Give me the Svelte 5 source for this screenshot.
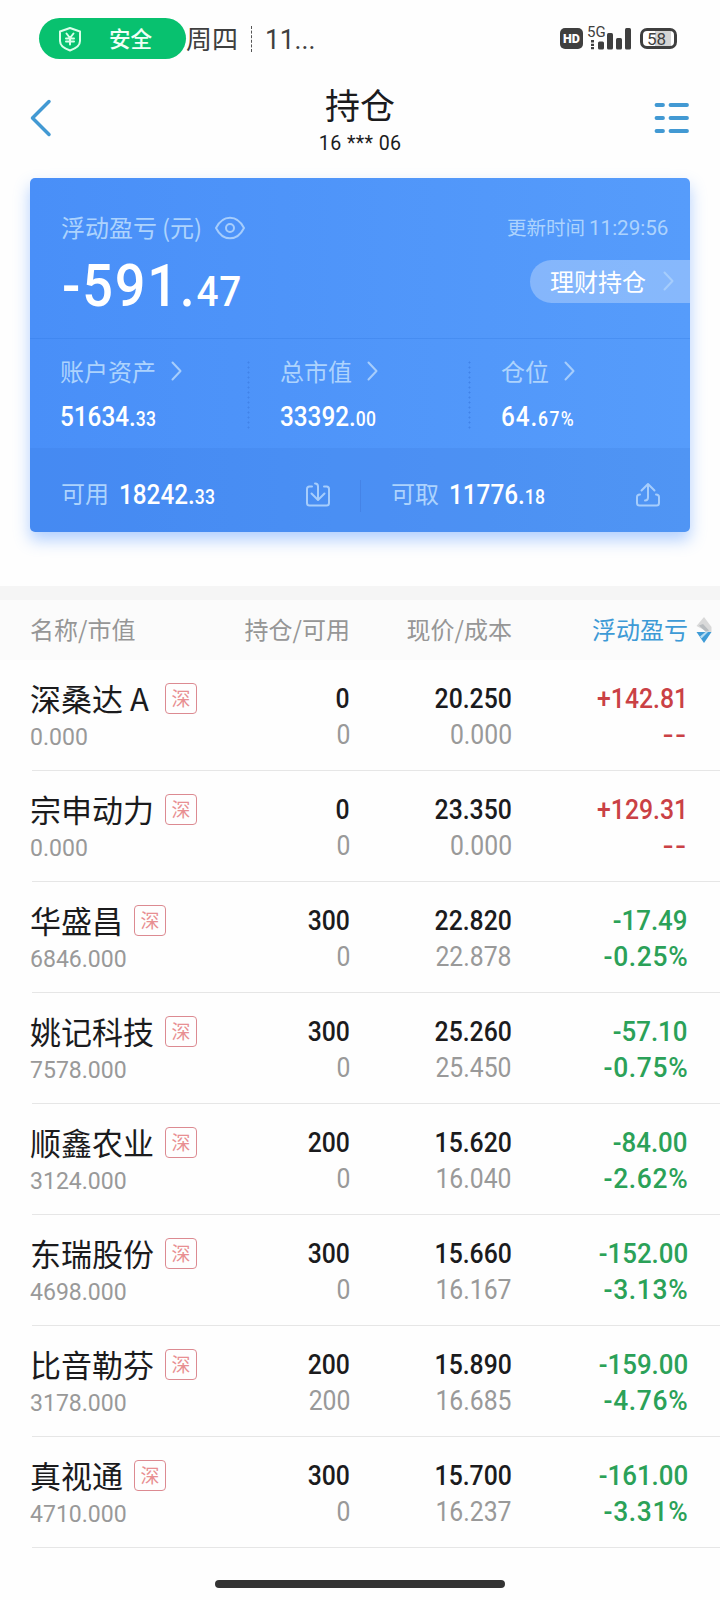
<script lang="ts">
  type Holding = {
    name: string;
    value: string;
    amount: string;
    available: string;
    price: string;
    cost: string;
    profit: string;
    rate: string;
  };

  const stats = [
    { label: '账户资产', whole: '51634.', part: '33' },
    { label: '总市值', whole: '33392.', part: '00' },
    { label: '仓位', whole: '64.', part: '67%' },
  ];

  const holdings: Holding[] = [
    { name: '深桑达 A', value: '0.000', amount: '0', available: '0', price: '20.250', cost: '0.000', profit: '+142.81', rate: '--' },
    { name: '宗申动力', value: '0.000', amount: '0', available: '0', price: '23.350', cost: '0.000', profit: '+129.31', rate: '--' },
    { name: '华盛昌', value: '6846.000', amount: '300', available: '0', price: '22.820', cost: '22.878', profit: '-17.49', rate: '-0.25%' },
    { name: '姚记科技', value: '7578.000', amount: '300', available: '0', price: '25.260', cost: '25.450', profit: '-57.10', rate: '-0.75%' },
    { name: '顺鑫农业', value: '3124.000', amount: '200', available: '0', price: '15.620', cost: '16.040', profit: '-84.00', rate: '-2.62%' },
    { name: '东瑞股份', value: '4698.000', amount: '300', available: '0', price: '15.660', cost: '16.167', profit: '-152.00', rate: '-3.13%' },
    { name: '比音勒芬', value: '3178.000', amount: '200', available: '200', price: '15.890', cost: '16.685', profit: '-159.00', rate: '-4.76%' },
    { name: '真视通', value: '4710.000', amount: '300', available: '0', price: '15.700', cost: '16.237', profit: '-161.00', rate: '-3.31%' },
  ];
</script>

{#snippet chevron()}
  <svg class="chevron" width="12" height="20" viewBox="0 0 12 20" aria-hidden="true">
    <path d="M1.500 1.500 9.500 10 1.500 18.500" />
  </svg>
{/snippet}

<div class="screen">
  <div class="status">
    <div class="safe">
      <svg width="24" height="26" viewBox="0 0 24 26" aria-hidden="true">
        <path d="M12 2 22 5.500V15c0 4.500-4 7.500-10 9.500C6 22.500 2 19.500 2 15V5.500z" />
        <path d="M8.500 7.500 12 12l3.500-4.500M12 12v6.500M8 12.500h8M8 15.500h8" />
      </svg>
      <span>安全</span>
    </div>
    <span class="weekday">周四</span>
    <span class="tick"></span>
    <span class="clock num">11...</span>
    <div class="indicators">
      <span class="hd">HD</span>
      <div class="signal">
        <span>5G</span>
        <svg width="45" height="26" viewBox="0 0 45 26" aria-hidden="true">
          <path d="M4 16h3v2.500H4zM4 19.700h3v2.200H4zM4 23h3v2.300H4z" />
          <rect x="11" y="17.500" width="6" height="8" rx="1.500" />
          <rect x="20" y="9" width="6" height="16.500" rx="1.500" />
          <rect x="29" y="14" width="6" height="11.500" rx="1.500" />
          <rect x="38" y="4" width="6" height="21.500" rx="1.500" />
        </svg>
      </div>
      <div class="battery"><span>58</span></div>
    </div>
  </div>

  <header class="nav">
    <button aria-label="返回">
      <svg width="22" height="38" viewBox="0 0 22 38" aria-hidden="true">
        <path d="M19 2.500 2.500 19 19 35.500" />
      </svg>
    </button>
    <div class="title">
      <h1>持仓</h1>
      <span class="num">16 *** 06</span>
    </div>
    <button class="menu" aria-label="菜单">
      <svg width="36" height="30" viewBox="0 0 36 30" aria-hidden="true">
        <path d="M2.500 2h6.500M16.500 2h16.500M2.500 15h6.500M16.500 15h16.500M2.500 28h6.500M16.500 28h16.500" />
      </svg>
    </button>
  </header>

  <section class="card">
    <div class="summary">
      <div class="summary-head">
        <span class="label">浮动盈亏</span>
        <span class="unit">(元)</span>
        <svg class="eye" width="32" height="24" viewBox="0 0 32 24" aria-hidden="true">
          <path d="M2 12C5 6 9.500 1.700 16 1.700S27 6 30 12C27 18 22.500 22.300 16 22.300S5 18 2 12z" />
          <circle cx="16" cy="12" r="4" />
        </svg>
        <span class="updated">更新时间 <span class="num">11:29:56</span></span>
      </div>
      <div class="summary-body">
        <span class="total num">-591.<small>47</small></span>
        <button class="wealth">理财持仓 {@render chevron()}</button>
      </div>
    </div>

    <div class="stats">
      {#each stats as stat}
        <div class="stat">
          <div class="stat-label">{stat.label} {@render chevron()}</div>
          <div class="amount num">{stat.whole}<small>{stat.part}</small></div>
        </div>
      {/each}
    </div>

    <div class="funds">
      <div class="fund">
        <span class="label">可用</span>
        <span class="amount num">18242.<small>33</small></span>
        <svg width="26" height="26" viewBox="0 0 26 26" aria-hidden="true">
          <path d="M7 4.500H4.500c-1.500 0-2.500 1-2.500 2.500V21c0 1.500 1 2.500 2.500 2.500h17c1.500 0 2.500-1 2.500-2.500V7c0-1.500-1-2.500-2.500-2.500H19" />
          <path d="M10 1.500c2 0 3 1 3 3V17M6.500 11.500 13 18l6.500-6.500" />
        </svg>
      </div>
      <div class="fund">
        <span class="label">可取</span>
        <span class="amount num">11776.<small>18</small></span>
        <svg width="26" height="26" viewBox="0 0 26 26" aria-hidden="true">
          <path d="M5 12.500c-2 0-3 1-3 2.500v6c0 1.500 1 2.500 2.500 2.500h17c1.500 0 2.500-1 2.500-2.500v-6c0-1.500-1-2.500-3-2.500" />
          <path d="M10 18.500c2 0 3-1 3-3V2M6.500 8.500 13 2l6.500 6.500" />
        </svg>
      </div>
    </div>
  </section>

  <section class="holdings">
    <div class="row head">
      <span>名称/市值</span>
      <span>持仓/可用</span>
      <span>现价/成本</span>
      <span class="active">浮动盈亏</span>
      <svg width="16" height="28" viewBox="0 0 16 28" aria-hidden="true">
        <path fill="#d9d9d9" d="M8 1 15.500 11v5H12L.5 10z" />
        <path fill="#b8bcbf" d="M3 9.500 7 8l6 6.500-3 1.500z" />
        <path fill="#3f9bd6" d="M.5 16h15L8 27z" />
        <path fill="#b5dcf3" d="M10 15.500h2.500L5.500 22.500 4 20.500z" />
      </svg>
    </div>
    {#each holdings as item}
      <div class="row item">
        <div class="stock">
          <div class="name"><span>{item.name}</span><i>深</i></div>
          <div class="value num">{item.value}</div>
        </div>
        <div class="pair"><span class="num">{item.amount}</span><span class="num muted">{item.available}</span></div>
        <div class="pair"><span class="num">{item.price}</span><span class="num muted">{item.cost}</span></div>
        <div class="pair {item.profit.startsWith('+') ? 'up' : 'down'}">
          <span class="num">{item.profit}</span><span class="num rate">{item.rate}</span>
        </div>
      </div>
    {/each}
  </section>

  <div class="home-bar"></div>
</div>

<style>
  :global(body) {
    background: #fefefe;
  }

  .screen {
    width: 720px;
    height: 1600px;
    overflow: hidden;
    display: flex;
    flex-direction: column;
    background: #fefefe;
    color: #1b1b1d;
    font-family: 'Noto Sans CJK SC', sans-serif;
  }

  button {
    padding: 0;
    border: 0;
    background: none;
    color: inherit;
    font: inherit;
  }

  svg {
    display: block;
    flex: none;
    fill: none;
    stroke-linecap: round;
    stroke-linejoin: round;
  }

  .num {
    display: inline-block;
    font-family: Roboto, 'Noto Sans CJK SC', sans-serif;
    font-weight: 500;
    white-space: nowrap;
    transform: scaleX(0.9);
    transform-origin: left center;
  }

  .status {
    height: 77px;
    display: flex;
    align-items: center;
    padding: 0 43px 0 39px;
    color: #3f3f3f;
  }

  .safe {
    width: 147px;
    height: 41px;
    box-sizing: border-box;
    display: flex;
    align-items: center;
    padding-left: 19px;
    gap: 27px;
    border-radius: 21px;
    background: #08c16f;
    color: #f0fff6;
    font-size: 21.5px;
    font-weight: 500;
    line-height: 39px;
  }

  .safe span {
    padding-bottom: 3px;
  }

  .safe svg {
    stroke: #d9ffe9;
    stroke-width: 2;
  }

  .weekday {
    padding-bottom: 2px;
    font-size: 26px;
    line-height: 40px;
  }

  .tick {
    height: 26px;
    margin: 0 13px;
    border-left: 1.500px dashed #555;
  }

  .clock {
    font-size: 28px;
    font-weight: 400;
    padding-top: 2px;
    transform: scaleX(0.94);
  }

  .indicators {
    display: flex;
    align-items: center;
    margin-left: auto;
  }

  .hd {
    width: 23px;
    height: 21px;
    border-radius: 5px;
    background: #3f3f3f;
    color: #fff;
    font: 900 12.5px/21px Roboto, sans-serif;
    text-align: center;
  }

  .signal {
    position: relative;
    margin: -3px 8px 0 4px;
  }

  .signal span {
    position: absolute;
    top: 1px;
    left: 0;
    font: 15px/14px Roboto, sans-serif;
  }

  .signal svg {
    fill: #3f3f3f;
  }

  .battery {
    width: 37px;
    height: 21px;
    box-sizing: border-box;
    border: 3px solid #3f3f3f;
    border-radius: 7px;
    background: linear-gradient(90deg, #fff 40%, #d4d4d4 40%, #d4d4d4 90%, #fff 90%);
  }

  .battery span {
    display: block;
    padding-left: 4px;
    font: 17px/16px Roboto, sans-serif;
  }

  .nav {
    height: 101px;
    box-sizing: border-box;
    display: grid;
    grid-template-columns: 60px 1fr 60px;
    padding: 0 30px;
  }

  .nav button {
    height: 82px;
    display: flex;
    align-items: center;
  }

  .nav svg {
    stroke: #4299d3;
    stroke-width: 3.5;
  }

  .nav .menu {
    justify-content: flex-end;
  }

  .menu svg {
    stroke-width: 3.8;
  }

  .title {
    display: flex;
    flex-direction: column;
    align-items: center;
  }

  h1 {
    margin: 1px 0 2px;
    font-size: 35px;
    font-weight: 400;
    line-height: 51px;
  }

  .title .num {
    font-size: 20px;
    line-height: 24px;
    font-weight: 450;
    letter-spacing: 0.4px;
    transform: scaleX(0.98);
    transform-origin: center;
  }

  .card {
    flex: none;
    height: 354px;
    margin: 0 30px;
    border-radius: 5px;
    background: linear-gradient(90deg, #498ff8, #569cfb);
    box-shadow: 0 8px 16px rgba(84, 150, 255, 0.45);
    color: #fff;
  }

  .summary {
    height: 160px;
    padding-left: 31px;
    border-bottom: 1px solid rgba(40, 110, 220, 0.25);
  }

  .summary-head {
    height: 66px;
    display: flex;
    align-items: center;
    box-sizing: border-box;
    padding: 33px 20px 0 0;
    color: #add3fd;
    font-size: 24px;
    line-height: 32px;
  }

  .label,
  .unit {
    padding-bottom: 2px;
  }

  .unit {
    margin-left: 5px;
  }

  .card svg {
    stroke: #a6cdfc;
    stroke-width: 2;
  }

  .eye {
    margin-left: 12px;
  }

  .updated {
    width: 163px;
    margin-left: auto;
    font-size: 19.5px;
    white-space: nowrap;
  }

  .updated .num {
    font-size: 21px;
    font-weight: 450;
    transform: scaleX(0.98);
  }

  .summary-body {
    display: flex;
    align-items: flex-start;
    justify-content: space-between;
  }

  .total {
    margin: 7px 0 0 1px;
    font-size: 60px;
    line-height: 70px;
    letter-spacing: 2px;
  }

  .total small {
    font-size: 43px;
    letter-spacing: 1px;
  }

  .wealth {
    width: 160px;
    height: 43px;
    margin-top: 16px;
    display: flex;
    align-items: center;
    gap: 17px;
    padding: 0 0 2px 20px;
    box-sizing: border-box;
    border-radius: 22px 0 0 22px;
    background: rgba(255, 255, 255, 0.29);
    font-size: 24px;
    line-height: 41px;
  }

  .stats {
    height: 109px;
    display: grid;
    grid-template-columns: 220px 221px 1fr;
    box-sizing: border-box;
    padding-top: 21px;
  }

  .stat {
    height: 69px;
    padding-left: 30px;
    background: radial-gradient(circle, #4183e8 0.8px, transparent 1.2px) right top / 3px 5px repeat-y;
  }

  .stat:last-child {
    background: none;
  }

  .stat-label {
    display: flex;
    align-items: center;
    gap: 15px;
    height: 22px;
    color: #add3fd;
    font-size: 24px;
    line-height: 22px;
  }

  .amount {
    font-size: 27px;
    line-height: 32px;
  }

  .stat .amount {
    margin-top: 19px;
  }

  .amount small {
    font-size: 19.5px;
    letter-spacing: 0.3px;
  }

  .stat:last-child .amount {
    letter-spacing: 1px;
  }

  .stat:last-child small {
    letter-spacing: 1.5px;
  }

  .funds {
    height: 84px;
    display: grid;
    grid-template-columns: 330px 330px;
    border-radius: 0 0 5px 5px;
    background: rgba(50, 110, 210, 0.16);
  }

  .fund {
    display: flex;
    align-items: center;
    padding: 9px 29px 0 31px;
    font-size: 24px;
  }

  .fund .label {
    margin-right: 10px;
    padding-bottom: 5px;
    color: #add3fd;
  }

  .fund .amount {
    padding-top: 4px;
  }

  .fund svg {
    margin-left: auto;
  }

  .fund + .fund {
    background: linear-gradient(#4583e6, #4583e6) left 32px / 1px 32px no-repeat;
  }

  .holdings {
    margin-top: 54px;
    border-top: 14px solid #f5f5f5;
  }

  .row {
    display: grid;
    grid-template-columns: 170px 150px 162px 176px 1fr;
    padding-left: 30px;
    text-align: right;
  }

  .head {
    height: 60px;
    align-items: center;
    background: #fbfbfb;
    color: #969696;
    font-size: 24px;
    line-height: 58px;
  }

  .head span {
    height: 60px;
  }

  .head span:first-child {
    text-align: left;
  }

  .head .active {
    color: #3d9ad6;
  }

  .head svg {
    margin-left: 8px;
  }

  .item {
    height: 111px;
    background: linear-gradient(#e6e6e6, #e6e6e6) 32px bottom / 100% 1px no-repeat;
  }

  .stock {
    padding-top: 21px;
    text-align: left;
  }

  .name {
    display: flex;
    align-items: center;
    height: 34px;
    font-size: 31px;
    line-height: 34px;
    white-space: nowrap;
  }

  .name i {
    width: 32px;
    height: 31px;
    box-sizing: border-box;
    margin-left: 11px;
    border: 1px solid #dc8a91;
    border-radius: 4px;
    color: #e88f92;
    font-size: 19px;
    font-style: normal;
    line-height: 28px;
    text-align: center;
  }

  .item:nth-child(2) .name span {
    width: 124px;
  }

  .value {
    margin-top: 7px;
    color: #999;
    font-size: 24px;
    font-weight: 450;
    line-height: 30px;
    transform: scaleX(0.96);
  }

  .pair {
    display: flex;
    flex-direction: column;
    align-items: flex-end;
    padding-top: 21px;
    font-size: 27.5px;
    line-height: 36px;
  }

  .pair .num {
    transform-origin: right center;
  }

  .muted {
    color: #999;
    font-weight: 450;
  }

  .up {
    color: #ca4145;
  }

  .down {
    color: #2ba158;
  }

  .down .num {
    transform: scaleX(0.94);
  }

  .down .rate {
    letter-spacing: 0.7px;
    transform: scaleX(0.96);
  }

  .up .rate {
    letter-spacing: 1.5px;
    transform: scaleX(1.15);
  }

  .home-bar {
    width: 290px;
    height: 8px;
    margin: 32px auto 0;
    border-radius: 4px;
    background: #333;
  }
</style>
